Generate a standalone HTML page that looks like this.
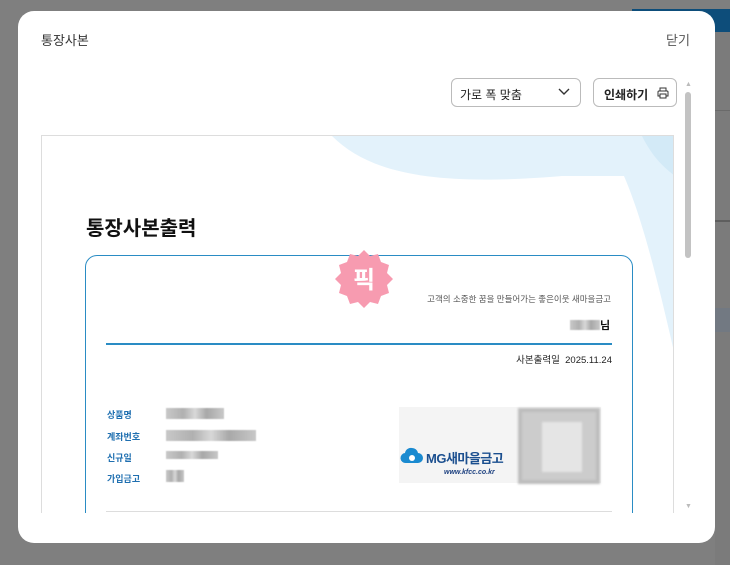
<!DOCTYPE html>
<html><head><meta charset="utf-8"><style>
*{margin:0;padding:0;box-sizing:border-box}
body{width:730px;height:565px;overflow:hidden;background:#7f7f7f;font-family:"Liberation Sans","Noto Sans CJK KR",sans-serif;position:relative}
.a{position:absolute}
.blur{background:linear-gradient(90deg,#c8c8c8,#b0b0b0 30%,#d8d8d8 50%,#a8a8a8 70%,#c8c8c8);filter:blur(0.6px)}
.lbl{font-size:9px;color:#1f6fb0;font-weight:bold}
</style></head><body>
<div class="a" style="left:632px;top:9px;width:98px;height:23px;background:#0d4d7a"></div>
<div class="a" style="left:715px;top:32px;width:15px;height:533px;background:#7b7b7b"></div>
<div class="a" style="left:715px;top:110px;width:15px;height:1px;background:#6a6a6a"></div>
<div class="a" style="left:715px;top:220px;width:15px;height:2px;background:#5e5e5e"></div>
<div class="a" style="left:715px;top:308px;width:15px;height:24px;background:#727982"></div>
<div class="a" style="left:18px;top:11px;width:697px;height:532px;background:#fff;border-radius:16px;overflow:hidden">
  <div class="a" style="left:23px;top:19px;font-size:13px;color:#333">통장사본</div>
  <div class="a" style="left:648px;top:19px;font-size:13px;color:#555">닫기</div>
  <div class="a" style="left:433px;top:67px;width:130px;height:29px;border:1px solid #bbb;border-radius:6px;font-size:12px;color:#222;padding:7px 0 0 8px">가로 폭 맞춤
    <svg class="a" style="left:106px;top:9px" width="12" height="8" viewBox="0 0 12 8"><path d="M1 1l5 5 5-5" fill="none" stroke="#333" stroke-width="1.4"/></svg></div>
  <div class="a" style="left:575px;top:67px;width:84px;height:29px;border:1px solid #bbb;border-radius:6px;font-size:12px;color:#222;padding:7px 0 0 10px;font-weight:bold">인쇄하기
    <svg class="a" style="left:63px;top:8px" width="12" height="12" viewBox="0 0 12 12"><path d="M3 4V1h6v3M2 4h8a1 1 0 011 1v4H9M3 9H1V5a1 1 0 011-1M3 7h6v4H3z" fill="none" stroke="#333" stroke-width="1"/></svg></div>
  <div class="a" style="left:667px;top:70px;font-size:7px;color:#bbb">▲</div>
  <div class="a" style="left:667px;top:81px;width:6px;height:166px;background:#c3c3c3;border-radius:3px"></div>
  <div class="a" style="left:667px;top:492px;font-size:7px;color:#bbb">▼</div>
  <div class="a" style="left:23px;top:124px;width:633px;height:378px;border:1px solid #ddd;border-bottom:none;overflow:hidden;background:#fff">
    <svg class="a" style="left:0;top:0" width="633" height="260" viewBox="0 0 633 260"><path d="M290 0C330 40 400 50 520 40L633 40V0z" fill="#e3f2fb"/><path d="M560 0C590 40 610 120 633 220V0z" fill="#e3f2fb"/><path d="M600 0C610 20 620 30 633 40V0z" fill="#d3eaf7"/></svg>
    <div class="a" style="left:44px;top:76px;font-size:20px;font-weight:bold;color:#111">통장사본출력</div>
    <div class="a" style="left:43px;top:119px;width:548px;height:320px;border:1.5px solid #2a8cc4;border-radius:12px"></div>
    <svg class="a" style="left:291px;top:112px" width="62" height="62" viewBox="0 0 62 62"><path d="M31 2l6 6 8-2 3 8 8 3-2 8 6 6-6 6 2 8-8 3-3 8-8-2-6 6-6-6-8 2-3-8-8-3 2-8-6-6 6-6-2-8 8-3 3-8 8 2z" fill="#f79bb0"/><text x="31" y="40" text-anchor="middle" font-size="24" font-weight="bold" fill="#fff" font-family="Noto Sans CJK KR,sans-serif">픽</text></svg>
    <div class="a" style="left:350px;top:157px;font-size:8.5px;color:#555;width:219px;text-align:right">고객의 소중한 꿈을 만들어가는 좋은이웃 새마을금고</div>
    <div class="a blur" style="left:528px;top:184px;width:30px;height:10px"></div>
    <div class="a" style="left:558px;top:181px;font-size:11px;color:#111;font-weight:bold">님</div>
    <div class="a" style="left:64px;top:207px;width:506px;height:1.5px;background:#2a8cc4"></div>
    <div class="a" style="left:400px;top:216px;font-size:9.5px;color:#222;width:170px;text-align:right">사본출력일 &nbsp;2025.11.24</div>
    <div class="a lbl" style="left:65px;top:272px">상품명</div>
    <div class="a lbl" style="left:65px;top:294px">계좌번호</div>
    <div class="a lbl" style="left:65px;top:315px">신규일</div>
    <div class="a lbl" style="left:65px;top:336px">가입금고</div>
    <div class="a blur" style="left:124px;top:272px;width:58px;height:11px"></div>
    <div class="a blur" style="left:124px;top:294px;width:90px;height:11px"></div>
    <div class="a blur" style="left:124px;top:315px;width:52px;height:8px"></div>
    <div class="a blur" style="left:124px;top:334px;width:18px;height:12px"></div>
    <div class="a" style="left:357px;top:271px;width:202px;height:76px;background:#f4f4f4"></div>
    <svg class="a" style="left:358px;top:310px" width="24" height="20" viewBox="0 0 24 20"><path d="M12 2a6 6 0 016 5 5 5 0 010 10H6a5 5 0 01-1-10 6 6 0 017-5z" fill="#1a8ad0"/><circle cx="12" cy="12" r="3" fill="#fff"/></svg>
    <div class="a" style="left:384px;top:312px;font-size:13px;font-weight:bold;color:#1b4f8f;letter-spacing:-0.5px">MG새마을금고</div>
    <div class="a" style="left:402px;top:333px;font-size:7px;font-weight:bold;font-style:italic;color:#1b3f7f">www.kfcc.co.kr</div>
    <div class="a" style="left:476px;top:272px;width:82px;height:76px;background:#ccc;border:4px solid #bdbdbd;filter:blur(1px)"><div style="margin:10px 20px;width:40px;height:50px;background:#e5e5e5"></div></div>
    <div class="a" style="left:64px;top:375px;width:506px;height:1px;background:#ddd"></div>
  </div>
</div>
</body></html>
